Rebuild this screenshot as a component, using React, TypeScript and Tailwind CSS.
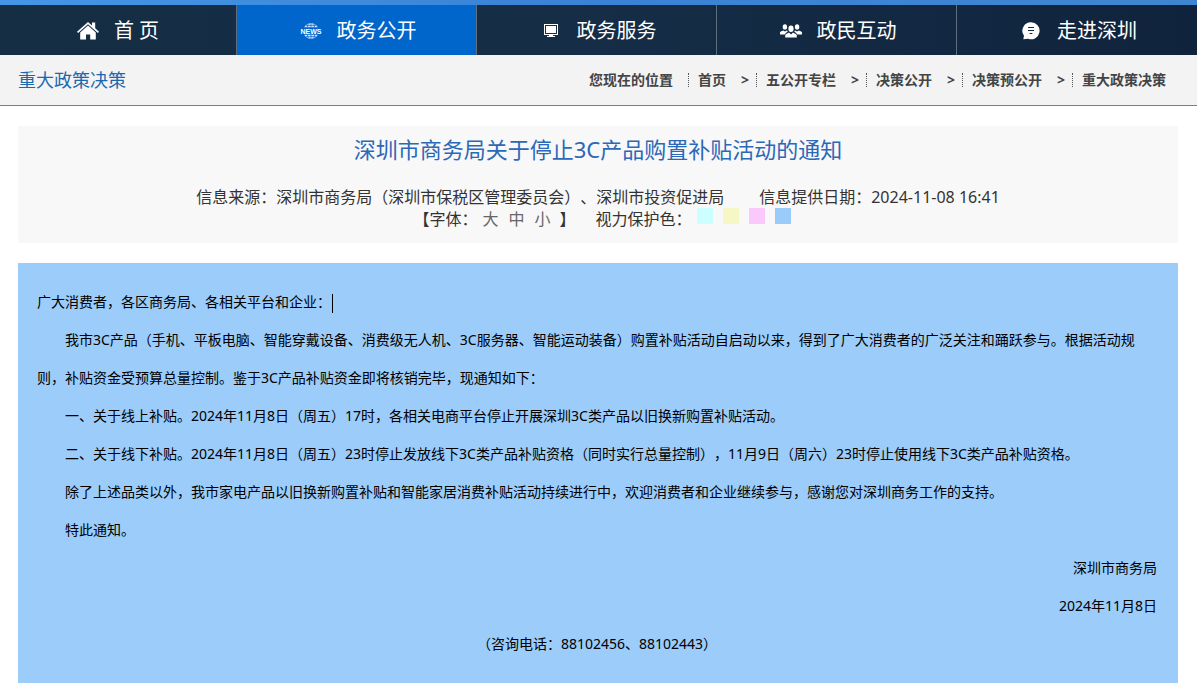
import type { ReactNode } from "react";

interface NavItem {
  label: string;
  icon: ReactNode;
  active?: boolean;
}

const HomeIcon = () => (
  <svg width="22" height="18" viewBox="0 0 22 18" fill="#fff" aria-hidden="true">
    <path d="M11 0 L15 3.6 V0.6 H18.2 V6.3 L22 9.8 L20.9 11 L11 2.2 L1.1 11 L0 9.8 Z" />
    <path d="M11 3.4 L18.8 10.4 V17.4 H13.2 V12.4 H9 V17.4 H3.2 V10.4 Z" />
  </svg>
);

const NewsIcon = () => (
  <svg width="24" height="16" viewBox="0 0 24 16" aria-hidden="true">
    <path d="M5.2 4.2 C6.6 1.7 9.2 0.3 12 0.3 S17.4 1.7 18.8 4.2 Z" fill="#cfe4f8" />
    <path d="M5.2 11.8 C6.6 14.3 9.2 15.7 12 15.7 S17.4 14.3 18.8 11.8 Z" fill="#cfe4f8" />
    <path
      d="M12 0.3 V4.2 M9.2 1 L8.3 4.2 M14.8 1 L15.7 4.2 M12 11.8 V15.7 M9.2 15 L8.3 11.8 M14.8 15 L15.7 11.8 M7 2.4 H17 M7 13.6 H17"
      stroke="#0066cc"
      strokeWidth="0.7"
    />
    <text x="12" y="10.6" textAnchor="middle" fill="#fff" fontFamily="Liberation Sans, sans-serif" fontSize="7" fontWeight="700">
      NEWS
    </text>
  </svg>
);

const ScreenIcon = () => (
  <svg width="14" height="14" viewBox="0 0 14 14" fill="#fff" aria-hidden="true">
    <path fillRule="evenodd" d="M0 0 H14 V11 H0 Z M1 1 V10 H13 V1 Z" />
    <path d="M2 2 H12 V9 H2 Z M5 11 H9 V12 H5 Z M3 12 H11 V13 H3 Z" />
  </svg>
);

const PeopleIcon = () => (
  <svg width="22" height="14" viewBox="0 0 22 14" fill="#fff" aria-hidden="true">
    <ellipse cx="4.9" cy="2.9" rx="2.2" ry="2.7" />
    <ellipse cx="17.1" cy="2.9" rx="2.2" ry="2.7" />
    <ellipse cx="11" cy="4.8" rx="2.6" ry="3.2" />
    <path d="M0 10.4 V8.6 C0 7.4 2 6.9 3.2 6.4 L5 7.4 L6.6 6.4 L7.8 7 C7.6 8.3 5.6 8.6 4.8 10.4 Z" />
    <path d="M22 10.4 V8.6 C22 7.4 20 6.9 18.8 6.4 L17 7.4 L15.4 6.4 L14.2 7 C14.4 8.3 16.4 8.6 17.2 10.4 Z" />
    <path d="M5.2 13.4 V11.6 C5.2 9.8 7.6 9.6 9 8.6 L11 10.4 L13 8.6 C14.4 9.6 16.8 9.8 16.8 11.6 V13.4 Z" />
  </svg>
);

const BubbleIcon = () => (
  <svg width="18" height="18" viewBox="0 0 18 18" aria-hidden="true">
    <path d="M9 0.3 A8.5 8.5 0 1 1 6.2 16.8 L1.3 17.2 L2 13.8 A8.5 8.5 0 0 1 9 0.3 Z" fill="#fff" />
    <path d="M6 5.5 H12 M6 8.5 H12 M7.6 11.5 H10.4" stroke="#12283f" strokeWidth="1.2" />
  </svg>
);

const NAV_ITEMS: NavItem[] = [
  { label: "首 页", icon: <HomeIcon /> },
  { label: "政务公开", icon: <NewsIcon />, active: true },
  { label: "政务服务", icon: <ScreenIcon /> },
  { label: "政民互动", icon: <PeopleIcon /> },
  { label: "走进深圳", icon: <BubbleIcon /> },
];

const CRUMBS = ["首页", "五公开专栏", "决策公开", "决策预公开", "重大政策决策"];

const FONT_SIZES = ["大", "中", "小"];

const SWATCHES = [
  { name: "青色", className: "bg-[#ccffff]" },
  { name: "黄色", className: "bg-[#f7f7c5]" },
  { name: "粉色", className: "bg-[#fbc8fb]" },
  { name: "蓝色", className: "bg-[#9bcbf9]" },
];

const PARAGRAPHS = [
  "我市3C产品（手机、平板电脑、智能穿戴设备、消费级无人机、3C服务器、智能运动装备）购置补贴活动自启动以来，得到了广大消费者的广泛关注和踊跃参与。根据活动规则，补贴资金受预算总量控制。鉴于3C产品补贴资金即将核销完毕，现通知如下：",
  "一、关于线上补贴。2024年11月8日（周五）17时，各相关电商平台停止开展深圳3C类产品以旧换新购置补贴活动。",
  "二、关于线下补贴。2024年11月8日（周五）23时停止发放线下3C类产品补贴资格（同时实行总量控制），11月9日（周六）23时停止使用线下3C类产品补贴资格。",
  "除了上述品类以外，我市家电产品以旧换新购置补贴和智能家居消费补贴活动持续进行中，欢迎消费者和企业继续参与，感谢您对深圳商务工作的支持。",
  "特此通知。",
];

function MainNav() {
  return (
    <nav className="overflow-hidden bg-linear-to-r from-[#162e43] via-[#152d46] to-[#10233d]">
      <div className="h-[5px] bg-linear-to-r from-[#4496e6] via-[#3a82d6] to-[#3f86d2]" />
      <ul className="-ml-[3px] grid grid-cols-5">
        {NAV_ITEMS.map((item) => (
          <li key={item.label} className="border-r border-[#5d6e7d] last:border-r-0">
            <a
              href="#"
              className={`flex h-[50px] items-center justify-center gap-3 pt-[2px] text-xl text-white ${item.active ? "bg-[#0066cc]" : ""}`}
            >
              <span className="flex w-7 justify-center">{item.icon}</span>
              <span>{item.label}</span>
            </a>
          </li>
        ))}
      </ul>
    </nav>
  );
}

function Breadcrumb() {
  return (
    <div className="flex h-[51px] items-center justify-between border-b border-[#3fa648] bg-[#f3f3f3] pr-[31px] pl-[18px]">
      <h2 className="text-lg text-[#1a69b0]">重大政策决策</h2>
      <ol className="flex items-center text-sm leading-[14px] font-bold text-[#444]">
        <li className="pr-[15px]">您现在的位置</li>
        {CRUMBS.map((crumb, index) => (
          <li key={crumb} className="flex border-l border-dotted border-[#555] pl-[9px]">
            <a href="#">{crumb}</a>
            {index < CRUMBS.length - 1 && <span className="w-[30px] pl-[15px]">&gt;</span>}
          </li>
        ))}
      </ol>
    </div>
  );
}

function ArticleHeader() {
  return (
    <header className="bg-[#f8f8f8] pt-2 pb-[13px] text-center text-[#333]">
      <h1 className="text-[22px] leading-[30px] text-[#2c68b8]">深圳市商务局关于停止3C产品购置补贴活动的通知</h1>
      <div className="mt-[22px] flex justify-center gap-[35px] leading-[22px]">
        <span>信息来源：深圳市商务局（深圳市保税区管理委员会）、深圳市投资促进局</span>
        <span>信息提供日期：2024-11-08 16:41</span>
      </div>
      <div className="flex items-center justify-center gap-5 pl-2 leading-[22px]">
        <div className="flex">
          <span>【字体：</span>
          <span className="flex gap-[10px] pr-[9px] pl-[5px] text-[#666]">
            {FONT_SIZES.map((size) => (
              <button key={size} type="button" className="cursor-pointer">
                {size}
              </button>
            ))}
          </span>
          <span>】</span>
        </div>
        <div className="flex">
          <span>视力保护色：</span>
          <span className="flex gap-[10px] pl-[5px]">
            {SWATCHES.map((swatch) => (
              <button
                key={swatch.name}
                type="button"
                aria-label={swatch.name}
                className={`size-4 cursor-pointer ${swatch.className}`}
              />
            ))}
          </span>
        </div>
      </div>
    </header>
  );
}

function ArticleBody() {
  return (
    <article className="mt-5 bg-[#9bccfa] py-5 pr-[21px] pl-[19px] text-sm leading-[38px] text-black">
      <p>
        广大消费者，各区商务局、各相关平台和企业：
        <span className="ml-px inline-block h-[19px] w-px bg-black align-middle" />
      </p>
      {PARAGRAPHS.map((text) => (
        <p key={text} className="indent-7">
          {text}
        </p>
      ))}
      <p className="text-right">深圳市商务局</p>
      <p className="text-right">2024年11月8日</p>
      <p className="text-center">（咨询电话：88102456、88102443）</p>
    </article>
  );
}

export default function App() {
  return (
    <div
      lang="zh-CN"
      className="bg-white font-['Noto_Sans','Noto_Sans_CJK_SC',sans-serif] [text-spacing-trim:space-all]"
    >
      <MainNav />
      <Breadcrumb />
      <main className="mt-5 mr-[19px] ml-[18px]">
        <ArticleHeader />
        <ArticleBody />
      </main>
    </div>
  );
}
